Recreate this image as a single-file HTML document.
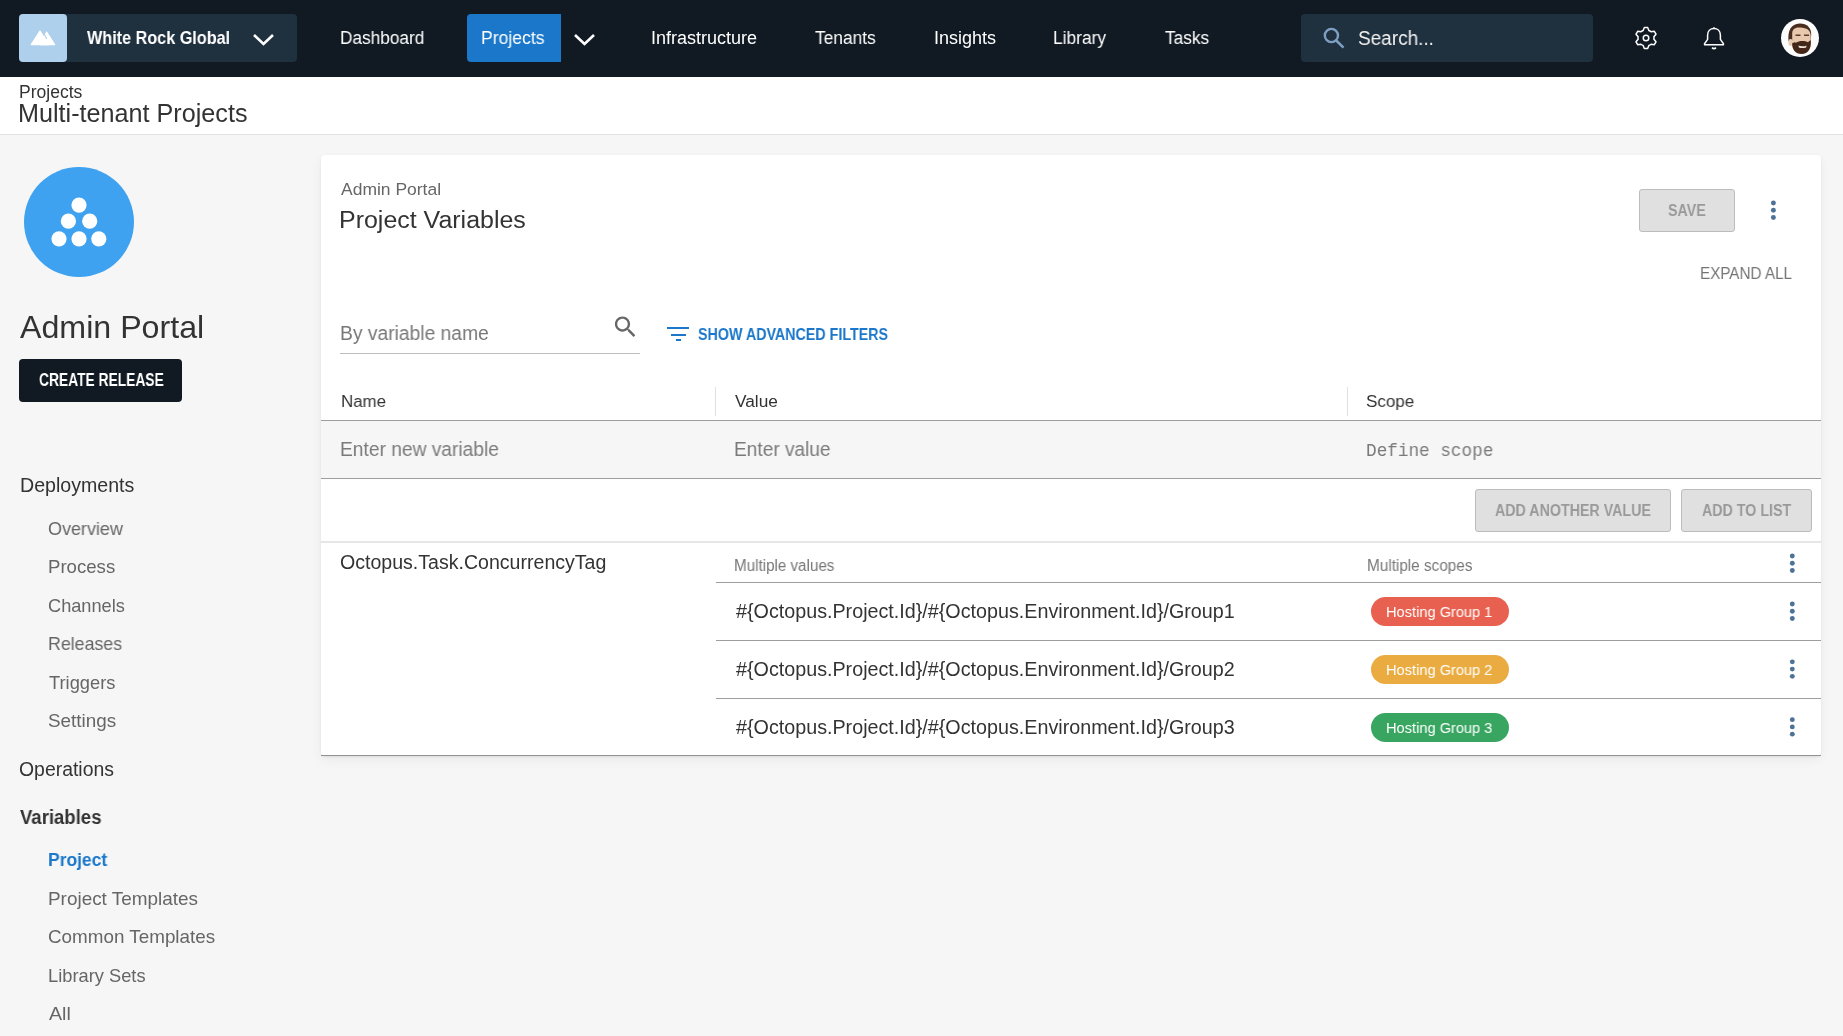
<!DOCTYPE html>
<html><head><meta charset="utf-8">
<style>
html,body{margin:0;padding:0}
body{width:1843px;height:1036px;overflow:hidden;position:relative;background:#f6f6f6;font-family:"Liberation Sans",sans-serif;color:#333}
.a{position:absolute;white-space:pre;line-height:1;will-change:transform}
svg{position:absolute;overflow:visible}
</style></head><body>
<div style="position:absolute;left:0px;top:0px;width:1843px;height:77px;background:#111a23;"></div>
<div style="position:absolute;left:19px;top:14px;width:278px;height:48px;background:#1f303f;border-radius:4px;"></div>
<div style="position:absolute;left:19px;top:14px;width:48px;height:48px;background:#aed0ec;border-radius:4px;"></div>
<svg style="left:19px;top:14px" width="48" height="48" viewBox="0 0 48 48"><path d="M12.3 30.5 L21 17.2 L29.6 30.5 Z" fill="#fff" stroke="#fff" stroke-width="1.3" stroke-linejoin="round"/><path d="M21.5 30.5 L27.6 18.2 L35.6 30.5 Z" fill="#fff" stroke="#fff" stroke-width="1.3" stroke-linejoin="round"/><path d="M25.4 20.6 L27.6 24.6" stroke="#aed0ec" stroke-width="1.1" stroke-linecap="round"/></svg>
<div class="a" style="left:87.0px;top:29px;font-size:18.6px;color:#fff;font-weight:bold;transform:scaleX(0.8712);transform-origin:0 0;">White Rock Global</div>
<svg style="left:250px;top:30px" width="28" height="20" viewBox="0 0 28 20"><path d="M4.0 5.0 L13.5 14.0 L23.0 5.0" fill="none" stroke="#fff" stroke-width="2.6"/></svg>
<div class="a" style="left:339.7px;top:29px;font-size:18px;color:#fff;transform:scaleX(0.9581);transform-origin:0 0;">Dashboard</div>
<div style="position:absolute;left:467px;top:14px;width:94px;height:48px;background:#1a77ca;border-radius:4px 0 0 4px;"></div>
<div class="a" style="left:481.3px;top:29px;font-size:18px;color:#fff;transform:scaleX(0.9766);transform-origin:0 0;">Projects</div>
<svg style="left:571px;top:30px" width="28" height="20" viewBox="0 0 28 20"><path d="M4.0 5.0 L13.5 14.0 L23.0 5.0" fill="none" stroke="#fff" stroke-width="2.6"/></svg>
<div class="a" style="left:651.1px;top:29px;font-size:18px;color:#fff;transform:scaleX(0.999);transform-origin:0 0;">Infrastructure</div>
<div class="a" style="left:815.3px;top:29px;font-size:18px;color:#fff;transform:scaleX(0.9635);transform-origin:0 0;">Tenants</div>
<div class="a" style="left:934.0px;top:29px;font-size:18px;color:#fff;transform:scaleX(0.9967);transform-origin:0 0;">Insights</div>
<div class="a" style="left:1053.2px;top:29px;font-size:18px;color:#fff;transform:scaleX(0.9648);transform-origin:0 0;">Library</div>
<div class="a" style="left:1165.3px;top:29px;font-size:18px;color:#fff;transform:scaleX(0.9587);transform-origin:0 0;">Tasks</div>
<div style="position:absolute;left:1301px;top:14px;width:292px;height:48px;background:#1f303f;border-radius:4px;"></div>
<svg style="left:1320px;top:25px" width="28" height="28" viewBox="0 0 28 28"><circle cx="11.4" cy="10.5" r="6.6" fill="none" stroke="#7d9fc2" stroke-width="2.4"/><path d="M16 15.3 L23.5 22.6" stroke="#7d9fc2" stroke-width="2.6"/></svg>
<div class="a" style="left:1357.9px;top:29px;font-size:19.5px;color:#f2f2f2;transform:scaleX(0.9737);transform-origin:0 0;">Search...</div>
<svg style="left:1634.3px;top:26.3px" width="24" height="24" viewBox="0 0 24 24"><path fill="none" stroke="#fff" stroke-width="1.5" stroke-linejoin="round" d="M9.13 4.53 L10.33 1.43 L13.67 1.43 L14.87 4.53 A8.0 8.0 0 0 1 17.03 5.78 L20.32 5.27 L21.99 8.17 L19.90 10.75 A8.0 8.0 0 0 1 19.90 13.25 L21.99 15.83 L20.32 18.73 L17.03 18.22 A8.0 8.0 0 0 1 14.87 19.47 L13.67 22.57 L10.33 22.57 L9.13 19.47 A8.0 8.0 0 0 1 6.97 18.22 L3.68 18.73 L2.01 15.83 L4.10 13.25 A8.0 8.0 0 0 1 4.10 10.75 L2.01 8.17 L3.68 5.27 L6.97 5.78 A8.0 8.0 0 0 1 9.13 4.53 Z"/><circle cx="12" cy="12" r="2.75" fill="none" stroke="#fff" stroke-width="1.5"/></svg>
<svg style="left:1701.7px;top:26px" width="24" height="24" viewBox="0 0 24 24"><path fill="none" stroke="#fff" stroke-width="1.5" stroke-linejoin="round" d="M2.6 18.8 Q2.2 18 3 17.1 L5.6 13.4 V9.2 C5.6 5.2 8.4 2.6 12 2.6 C15.6 2.6 18.4 5.2 18.4 9.2 V13.4 L21 17.1 Q21.8 18 21.4 18.8 Z"/><path fill="none" stroke="#fff" stroke-width="1.5" d="M12 1.2 V2.6 M10 21.6 Q12 23.6 14 21.6"/></svg>
<svg style="left:1781px;top:19px" width="38" height="38" viewBox="0 0 38 38"><circle cx="19" cy="19" r="19" fill="#fdfdfd"/><path d="M7.5 22 C6.5 12 10 5 18.5 4.6 C26 4.4 30.5 9 30.2 16 L29.5 22 Z" fill="#4a2e1f"/><path d="M11.2 14 C11.5 9.5 15 8.3 19.5 8.6 C25.5 9 29.6 11 29.7 17 L29.6 27 C29.4 31 26 34 20.5 34 C15 34 11.5 31 11.2 27 Z" fill="#e8c9ae"/><ellipse cx="9.6" cy="23.5" rx="2.2" ry="3.4" fill="#e6cdb8"/><path d="M14.5 16.3 h5 M23 16.3 h5" stroke="#5b3b28" stroke-width="1.6"/><path d="M11 23 C11.5 26.5 12.5 21.5 15 23.8 C18 21.5 24 21.5 27 23.3 C28.5 22 29.5 21 29.8 21.5 C30.5 29 27.5 35 20.5 35 C14.5 35 11 31 11 23 Z" fill="#432819"/><path d="M17.5 26.6 C19.5 27.6 23.5 27.6 25.5 26.4 L25.2 28.4 C23 29.3 19.8 29.3 17.8 28.4 Z" fill="#efe4d6"/></svg>
<div style="position:absolute;left:0px;top:77px;width:1843px;height:57px;background:#fff;"></div>
<div style="position:absolute;left:0px;top:134px;width:1843px;height:1px;background:#e2e2e2;"></div>
<div class="a" style="left:19.2px;top:84px;font-size:17.5px;color:#333;transform:scaleX(1.0016);transform-origin:0 0;">Projects</div>
<div class="a" style="left:18.0px;top:101px;font-size:25px;color:#333;transform:scaleX(1.0071);transform-origin:0 0;">Multi-tenant Projects</div>
<svg style="left:24px;top:167px" width="110" height="110"><circle cx="55" cy="55" r="55" fill="#3ea2f0"/><circle cx="55.00" cy="38.10" r="7.6" fill="#fff"/><circle cx="44.40" cy="54.20" r="7.6" fill="#fff"/><circle cx="65.70" cy="54.20" r="7.6" fill="#fff"/><circle cx="35.00" cy="71.80" r="7.6" fill="#fff"/><circle cx="55.00" cy="71.80" r="7.6" fill="#fff"/><circle cx="74.80" cy="71.80" r="7.6" fill="#fff"/></svg>
<div class="a" style="left:20.0px;top:311px;font-size:32px;color:#333;transform:scaleX(1.0055);transform-origin:0 0;">Admin Portal</div>
<div style="position:absolute;left:19px;top:359px;width:163px;height:43px;background:#111a23;border-radius:4px;"></div>
<div class="a" style="left:38.7px;top:372px;font-size:17.5px;color:#fff;font-weight:bold;transform:scaleX(0.7886);transform-origin:0 0;">CREATE RELEASE</div>
<div class="a" style="left:19.7px;top:476px;font-size:19.6px;color:#333;transform:scaleX(0.9973);transform-origin:0 0;">Deployments</div>
<div class="a" style="left:47.9px;top:520px;font-size:18.2px;color:#666;transform:scaleX(0.988);transform-origin:0 0;">Overview</div>
<div class="a" style="left:47.9px;top:558px;font-size:18.2px;color:#666;transform:scaleX(1.0234);transform-origin:0 0;">Process</div>
<div class="a" style="left:47.9px;top:597px;font-size:18.2px;color:#666;transform:scaleX(0.9947);transform-origin:0 0;">Channels</div>
<div class="a" style="left:47.9px;top:635px;font-size:18.2px;color:#666;transform:scaleX(0.9773);transform-origin:0 0;">Releases</div>
<div class="a" style="left:48.9px;top:674px;font-size:18.2px;color:#666;transform:scaleX(1.0061);transform-origin:0 0;">Triggers</div>
<div class="a" style="left:47.9px;top:712px;font-size:18.2px;color:#666;transform:scaleX(1.0375);transform-origin:0 0;">Settings</div>
<div class="a" style="left:18.9px;top:760px;font-size:19.4px;color:#333;transform:scaleX(1.0011);transform-origin:0 0;">Operations</div>
<div class="a" style="left:20.0px;top:808px;font-size:19.4px;color:#333;font-weight:bold;transform:scaleX(0.9565);transform-origin:0 0;">Variables</div>
<div class="a" style="left:47.5px;top:851px;font-size:18.2px;color:#1a77ca;font-weight:bold;transform:scaleX(0.9607);transform-origin:0 0;">Project</div>
<div class="a" style="left:47.5px;top:890px;font-size:18.2px;color:#666;transform:scaleX(1.0399);transform-origin:0 0;">Project Templates</div>
<div class="a" style="left:47.5px;top:928px;font-size:18.2px;color:#666;transform:scaleX(1.0356);transform-origin:0 0;">Common Templates</div>
<div class="a" style="left:47.5px;top:967px;font-size:18.2px;color:#666;transform:scaleX(1.0052);transform-origin:0 0;">Library Sets</div>
<div class="a" style="left:48.5px;top:1005px;font-size:18.2px;color:#666;transform:scaleX(1.0789);transform-origin:0 0;">All</div>
<div style="position:absolute;left:321px;top:155px;width:1500px;height:601px;background:#fff;border-radius:4px;box-shadow:0 1px 2px rgba(0,0,0,0.08),0 4px 12px rgba(0,0,0,0.05)"></div>
<div class="a" style="left:341.0px;top:181px;font-size:17.4px;color:#666;transform:scaleX(1.0051);transform-origin:0 0;">Admin Portal</div>
<div class="a" style="left:339.0px;top:208px;font-size:24.7px;color:#333;transform:scaleX(1.011);transform-origin:0 0;">Project Variables</div>
<div style="position:absolute;left:1639px;top:189px;width:96px;height:43px;background:#e0e0e0;border:1px solid #bcbcbc;border-radius:3px;box-sizing:border-box;"></div>
<div class="a" style="left:1668.0px;top:202px;font-size:17.4px;color:#999;font-weight:bold;transform:scaleX(0.8196);transform-origin:0 0;">SAVE</div>
<svg style="left:1768px;top:198px" width="10" height="24"><circle cx="5.40" cy="5.05" r="2.45" fill="#4d7298"/><circle cx="5.40" cy="12.30" r="2.45" fill="#4d7298"/><circle cx="5.40" cy="19.55" r="2.45" fill="#4d7298"/></svg>
<div class="a" style="left:1700.0px;top:265px;font-size:17.2px;color:#747474;transform:scaleX(0.8864);transform-origin:0 0;">EXPAND ALL</div>
<div class="a" style="left:340.0px;top:324px;font-size:19.4px;color:#777;transform:scaleX(0.9932);transform-origin:0 0;">By variable name</div>
<div style="position:absolute;left:340px;top:353px;width:300px;height:1px;background:#bdbdbd;"></div>
<svg style="left:611px;top:313px" width="28" height="28" viewBox="-0.35 0 24 24"><path fill="#666" d="M15.5 14h-.79l-.28-.27C15.41 12.59 16 11.11 16 9.5 16 5.91 13.09 3 9.5 3S3 5.91 3 9.5 5.91 16 9.5 16c1.61 0 3.09-.59 4.23-1.57l.27.28v.79l5 4.99L20.49 19l-4.99-5zm-6 0C7.01 14 5 11.99 5 9.5S7.01 5 9.5 5 14 7.01 14 9.5 11.99 14 9.5 14z"/></svg>
<div style="position:absolute;left:667px;top:327px;width:22px;height:2px;background:#1a77ca;"></div>
<div style="position:absolute;left:671px;top:334px;width:14.5px;height:2px;background:#1a77ca;"></div>
<div style="position:absolute;left:676px;top:339px;width:5px;height:2px;background:#1a77ca;"></div>
<div class="a" style="left:698.0px;top:326px;font-size:17.3px;color:#1a77ca;font-weight:bold;transform:scaleX(0.8261);transform-origin:0 0;">SHOW ADVANCED FILTERS</div>
<div class="a" style="left:340.5px;top:393px;font-size:17.3px;color:#333;transform:scaleX(0.9778);transform-origin:0 0;">Name</div>
<div class="a" style="left:735.4px;top:393px;font-size:17.3px;color:#333;transform:scaleX(1.0);transform-origin:0 0;">Value</div>
<div class="a" style="left:1366.2px;top:393px;font-size:17.3px;color:#333;transform:scaleX(0.9833);transform-origin:0 0;">Scope</div>
<div style="position:absolute;left:715px;top:387px;width:1px;height:29px;background:#e0e0e0;"></div>
<div style="position:absolute;left:1347px;top:387px;width:1px;height:29px;background:#e0e0e0;"></div>
<div style="position:absolute;left:321px;top:420px;width:1500px;height:1px;background:#9e9e9e;"></div>
<div style="position:absolute;left:321px;top:421px;width:1500px;height:57px;background:#f6f6f6;"></div>
<div style="position:absolute;left:321px;top:478px;width:1500px;height:1px;background:#9e9e9e;"></div>
<div class="a" style="left:340.0px;top:440px;font-size:19.3px;color:#7a7a7a;transform:scaleX(0.9949);transform-origin:0 0;">Enter new variable</div>
<div class="a" style="left:734.3px;top:440px;font-size:19.3px;color:#7a7a7a;transform:scaleX(0.9906);transform-origin:0 0;">Enter value</div>
<div class="a" style="left:1366.2px;top:443px;font-size:17.8px;color:#7a7a7a;font-family:'Liberation Mono',monospace;transform:scaleX(0.9944);transform-origin:0 0;">Define scope</div>
<div style="position:absolute;left:1475px;top:489px;width:196px;height:43px;background:#e0e0e0;border:1px solid #bcbcbc;border-radius:3px;box-sizing:border-box;"></div>
<div style="position:absolute;left:1681px;top:489px;width:131px;height:43px;background:#e0e0e0;border:1px solid #bcbcbc;border-radius:3px;box-sizing:border-box;"></div>
<div class="a" style="left:1495.1px;top:502px;font-size:17.4px;color:#999;font-weight:bold;transform:scaleX(0.8189);transform-origin:0 0;">ADD ANOTHER VALUE</div>
<div class="a" style="left:1702.0px;top:502px;font-size:17.4px;color:#999;font-weight:bold;transform:scaleX(0.8193);transform-origin:0 0;">ADD TO LIST</div>
<div style="position:absolute;left:321px;top:541px;width:1500px;height:2px;background:#e6e6e6;"></div>
<div class="a" style="left:340.0px;top:553px;font-size:19.4px;color:#333;transform:scaleX(1.0088);transform-origin:0 0;">Octopus.Task.ConcurrencyTag</div>
<div class="a" style="left:734.4px;top:558px;font-size:15.6px;color:#777;transform:scaleX(0.9735);transform-origin:0 0;">Multiple values</div>
<div class="a" style="left:1366.6px;top:558px;font-size:15.6px;color:#777;transform:scaleX(0.9811);transform-origin:0 0;">Multiple scopes</div>
<svg style="left:1787px;top:551px" width="10" height="24"><circle cx="5.30" cy="5.05" r="2.45" fill="#4d7298"/><circle cx="5.30" cy="12.30" r="2.45" fill="#4d7298"/><circle cx="5.30" cy="19.55" r="2.45" fill="#4d7298"/></svg>
<div style="position:absolute;left:716px;top:582px;width:1105px;height:1px;background:#9e9e9e;"></div>
<div style="position:absolute;left:716px;top:640px;width:1105px;height:1px;background:#9e9e9e;"></div>
<div style="position:absolute;left:716px;top:698px;width:1105px;height:1px;background:#9e9e9e;"></div>
<div style="position:absolute;left:321px;top:755px;width:1500px;height:1px;background:#939393;"></div>
<div class="a" style="left:736.0px;top:602px;font-size:19.4px;color:#333;transform:scaleX(1.0169);transform-origin:0 0;">#{Octopus.Project.Id}/#{Octopus.Environment.Id}/Group1</div>
<div style="position:absolute;left:1371px;top:597.0px;width:138px;height:29px;border-radius:15px;background:#e8604f"></div>
<div class="a" style="left:1385.6px;top:605px;font-size:14.7px;color:#fff;transform:scaleX(0.9943);transform-origin:0 0;">Hosting Group 1</div>
<svg style="left:1787px;top:599px" width="10" height="24"><circle cx="5.30" cy="5.05" r="2.45" fill="#4d7298"/><circle cx="5.30" cy="12.30" r="2.45" fill="#4d7298"/><circle cx="5.30" cy="19.55" r="2.45" fill="#4d7298"/></svg>
<div class="a" style="left:736.0px;top:660px;font-size:19.4px;color:#333;transform:scaleX(1.0169);transform-origin:0 0;">#{Octopus.Project.Id}/#{Octopus.Environment.Id}/Group2</div>
<div style="position:absolute;left:1371px;top:654.8px;width:138px;height:29px;border-radius:15px;background:#eaab40"></div>
<div class="a" style="left:1385.6px;top:663px;font-size:14.7px;color:#fff;transform:scaleX(0.9943);transform-origin:0 0;">Hosting Group 2</div>
<svg style="left:1787px;top:657px" width="10" height="24"><circle cx="5.30" cy="4.85" r="2.45" fill="#4d7298"/><circle cx="5.30" cy="12.10" r="2.45" fill="#4d7298"/><circle cx="5.30" cy="19.35" r="2.45" fill="#4d7298"/></svg>
<div class="a" style="left:736.0px;top:718px;font-size:19.4px;color:#333;transform:scaleX(1.0169);transform-origin:0 0;">#{Octopus.Project.Id}/#{Octopus.Environment.Id}/Group3</div>
<div style="position:absolute;left:1371px;top:712.6px;width:138px;height:29px;border-radius:15px;background:#38a661"></div>
<div class="a" style="left:1385.6px;top:721px;font-size:14.7px;color:#fff;transform:scaleX(0.9943);transform-origin:0 0;">Hosting Group 3</div>
<svg style="left:1787px;top:714px" width="10" height="24"><circle cx="5.30" cy="5.65" r="2.45" fill="#4d7298"/><circle cx="5.30" cy="12.90" r="2.45" fill="#4d7298"/><circle cx="5.30" cy="20.15" r="2.45" fill="#4d7298"/></svg>
</body></html>
